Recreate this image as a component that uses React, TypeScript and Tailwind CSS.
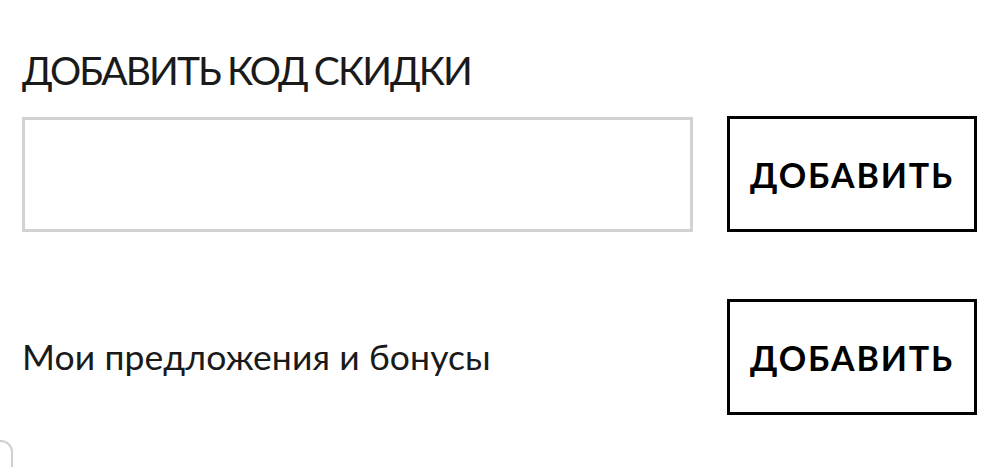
import React from 'react';

const font = { fontFamily: 'Lato, "Noto Sans", sans-serif' };

const AddButton: React.FC = () => (
  <button className="w-[250px] h-[116px] shrink-0 border-[3px] border-black bg-white text-black text-[34px] font-bold tracking-[1.9px]">
    ДОБАВИТЬ
  </button>
);

export default function App() {
  return (
    <div className="relative w-[1000px] h-[467px] overflow-hidden bg-white text-[#1a1a1a]" style={font}>
      <div className="pl-[22px] pr-[23px] pt-[46px]">
        <h2 className="text-[39px] leading-[48px] font-normal m-0 tracking-[-1.9px] [word-spacing:-1px]">ДОБАВИТЬ КОД СКИДКИ</h2>
        <div className="mt-[22px] flex items-center gap-[34px]">
          <input
            type="text"
            className="flex-1 h-[115px] border-[3px] border-[#d2d2d2] bg-white outline-none px-4 text-[30px]"
          />
          <AddButton />
        </div>
        <div className="mt-[67px] flex items-center justify-between">
          <span className="text-[35.5px] tracking-[0.1px]">Мои предложения и бонусы</span>
          <AddButton />
        </div>
      </div>
      <div className="absolute left-[-30px] top-[440px] w-[43px] h-[60px] rounded-[12px] border-2 border-[#cfcfcf]" />
    </div>
  );
}
